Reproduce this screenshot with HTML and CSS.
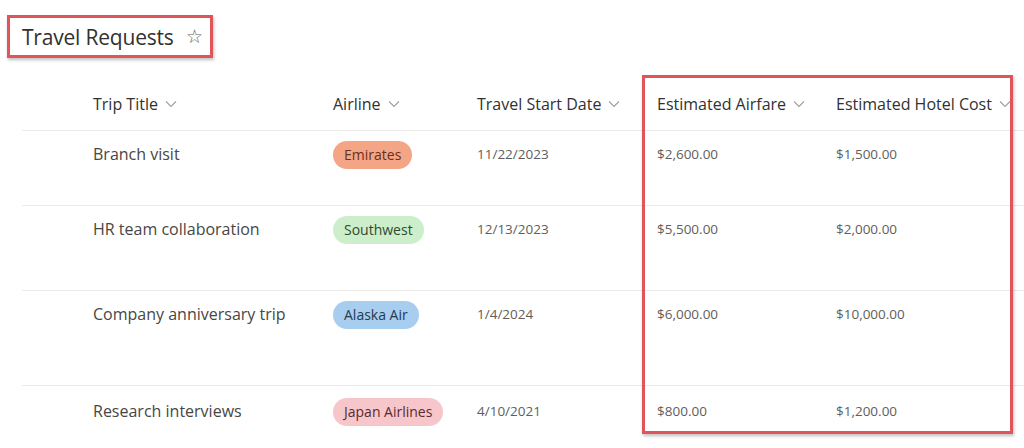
FILE: index.html
```html
<!DOCTYPE html>
<html lang="en">
<head>
  <meta charset="UTF-8">
  <title>Travel Requests</title>
  <link rel="stylesheet" href="styles.css">
</head>
<body>

  <div class="title-box">
    <h1>Travel Requests</h1>
    <span class="star">&#9734;</span>
  </div>

  <div class="list">
    <!-- Cabecera -->
    <div class="row head">
      <div class="cell">Trip Title <svg class="chev" viewBox="0 0 12 8"><path d="M1 1.5 L6 6.5 L11 1.5"/></svg></div>
      <div class="cell">Airline <svg class="chev" viewBox="0 0 12 8"><path d="M1 1.5 L6 6.5 L11 1.5"/></svg></div>
      <div class="cell">Travel Start Date <svg class="chev" viewBox="0 0 12 8"><path d="M1 1.5 L6 6.5 L11 1.5"/></svg></div>
      <div class="cell">Estimated Airfare <svg class="chev" viewBox="0 0 12 8"><path d="M1 1.5 L6 6.5 L11 1.5"/></svg></div>
      <div class="cell">Estimated Hotel Cost <svg class="chev" viewBox="0 0 12 8"><path d="M1 1.5 L6 6.5 L11 1.5"/></svg></div>
    </div>

    <div class="row r1">
      <div class="cell name">Branch visit</div>
      <div class="cell"><span class="pill emirates">Emirates</span></div>
      <div class="cell small">11/22/2023</div>
      <div class="cell small">$2,600.00</div>
      <div class="cell small">$1,500.00</div>
    </div>

    <div class="row r2">
      <div class="cell name">HR team collaboration</div>
      <div class="cell"><span class="pill southwest">Southwest</span></div>
      <div class="cell small">12/13/2023</div>
      <div class="cell small">$5,500.00</div>
      <div class="cell small">$2,000.00</div>
    </div>

    <div class="row r3">
      <div class="cell name">Company anniversary trip</div>
      <div class="cell"><span class="pill alaska">Alaska Air</span></div>
      <div class="cell small">1/4/2024</div>
      <div class="cell small">$6,000.00</div>
      <div class="cell small">$10,000.00</div>
    </div>

    <div class="row r4">
      <div class="cell name">Research interviews</div>
      <div class="cell"><span class="pill japan">Japan Airlines</span></div>
      <div class="cell small">4/10/2021</div>
      <div class="cell small">$800.00</div>
      <div class="cell small">$1,200.00</div>
    </div>
  </div>

  <div class="highlight"></div>

</body>
</html>
```

FILE: styles.css
```css
body {
  margin: 0;
  font-family: 'Open Sans', 'Noto Sans', sans-serif;
  background: white;
  color: #323130;
  overflow: hidden;
  height: 448px;
  position: relative;
}

.title-box {
  display: inline-flex;
  align-items: center;
  margin: 15px 0 0 7px;
  height: 37px;
  padding: 0 7px 0 12px;
  border: 3px solid #e0555a;
  box-shadow: 1px 2px 3px rgba(0,0,0,0.25);
}

h1 {
  margin: 0;
  font-size: 21px;
  font-weight: 400;
  color: #323130;
  letter-spacing: -0.2px;
}

.star {
  margin-left: 12px;
  font-size: 19px;
  color: #605e5c;
  line-height: 1;
}

.list {
  margin: 20px 0 0 22px;
}

.row {
  box-sizing: border-box;
  display: grid;
  grid-template-columns: 240px 144px 180px 179px 1fr;
  padding-left: 71px;
  border-bottom: 1px solid #edebe9;
  align-items: start;
}

.row.head {
  height: 53px;
  align-items: center;
}

.head .cell {
  font-size: 16px;
  font-weight: 500;
  color: #323130;
  white-space: nowrap;
  display: flex;
  align-items: center;
}

.chev {
  width: 12px;
  height: 8px;
  margin-left: 7px;
  fill: none;
  stroke: #a19f9d;
  stroke-width: 1.1;
}

.r1 { height: 75px; padding-top: 9px; }
.r2 { height: 85px; padding-top: 9px; }
.r3 { height: 95px; padding-top: 9px; }
.r4 { height: 63px; padding-top: 11px; border-bottom: none; }

.row .cell {
  line-height: 28px;
}

.name {
  font-size: 16px;
  color: #484644;
}

.small {
  font-size: 13.5px;
  color: #605e5c;
}

.pill {
  display: inline-block;
  height: 28px;
  line-height: 28px;
  padding: 0 11px;
  border-radius: 14px;
  font-size: 14px;
}

.emirates { background: #f4a586; color: #6b2f1c; }
.southwest { background: #cdeecb; color: #2f4a30; }
.alaska { background: #a7cdef; color: #243a52; }
.japan { background: #f7c6ca; color: #5a2a2e; }

.highlight {
  position: absolute;
  left: 642px;
  top: 75px;
  width: 365px;
  height: 353px;
  border: 3px solid #e0555a;
  box-shadow: 1px 2px 3px rgba(0,0,0,0.25);
  pointer-events: none;
}
```
